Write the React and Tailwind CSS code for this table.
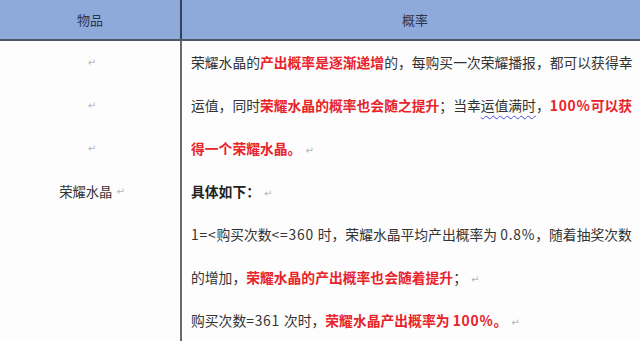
import React from 'react';

const R = ({ children }) => <span className="font-bold text-[#e8232a]">{children}</span>;
const L = ({ children }) => <span className="tracking-[0.8px]">{children}</span>;
const Mark = () => <span className="ml-1 text-[10px] text-[#b5b5b5]" style={{ fontFamily: 'DejaVu Sans' }}>↵</span>;

const lines = [
    <>荣耀水晶的<R>产出概率是逐渐递增</R>的，每购买一次荣耀播报，都可以获得幸</>,
    <>运值，同时<R>荣耀水晶的概率也会随之提升</R>；当幸<span className="underline decoration-wavy decoration-[#4b4bd8] decoration-1 underline-offset-4">运值满时</span>，<R><L>100%</L>可以获</R></>,
    <><R>得一个荣耀水晶。</R><Mark /></>,
    <><span className="font-bold text-[#222]">具体如下：</span><Mark /></>,
    <><L>1=&lt;</L>购买次数<L>&lt;=360 </L>时，荣耀水晶平均产出概率为 <L>0.8%</L>，随着抽奖次数</>,
    <>的增加，<R>荣耀水晶的产出概率也会随着提升</R>；<Mark /></>,
    <>购买次数<L>=361 </L>次时，<R>荣耀水晶产出概率为 <L>100%</L>。</R><Mark /></>,
];

const App = () => {
    return (
        <div
            className="w-[640px] h-[341px] overflow-hidden bg-[#fdfdfd] text-[#333]"
            style={{ fontFamily: '"Noto Sans CJK SC", "Noto Sans", sans-serif' }}
            lang="zh-CN"
        >
            <div className="grid grid-cols-[182px_1fr] h-[41px] bg-[#8eaadb] border-b-2 border-[#4f5866] text-[13px] text-[#2a3550]">
                <div className="flex items-center justify-center border-r-2 border-[#34425e]">物品</div>
                <div className="flex items-center justify-center pl-2">概率</div>
            </div>
            <div className="grid grid-cols-[182px_1fr] text-[13.8px]">
                <div className="border-r-2 border-[#6a6a6a] h-[300px] text-[13.3px]">
                    <div className="h-[43px] flex items-center justify-center"><Mark /></div>
                    <div className="h-[43px] flex items-center justify-center"><Mark /></div>
                    <div className="h-[43px] flex items-center justify-center"><Mark /></div>
                    <div className="h-[43px] flex items-center justify-center pl-1">荣耀水晶<Mark /></div>
                </div>
                <div className="pl-[9px]">
                    {lines.map((line, i) => (
                        <div key={i} className="h-[43px] flex items-center whitespace-nowrap">
                            <span>{line}</span>
                        </div>
                    ))}
                </div>
            </div>
        </div>
    );
};

export default App;
